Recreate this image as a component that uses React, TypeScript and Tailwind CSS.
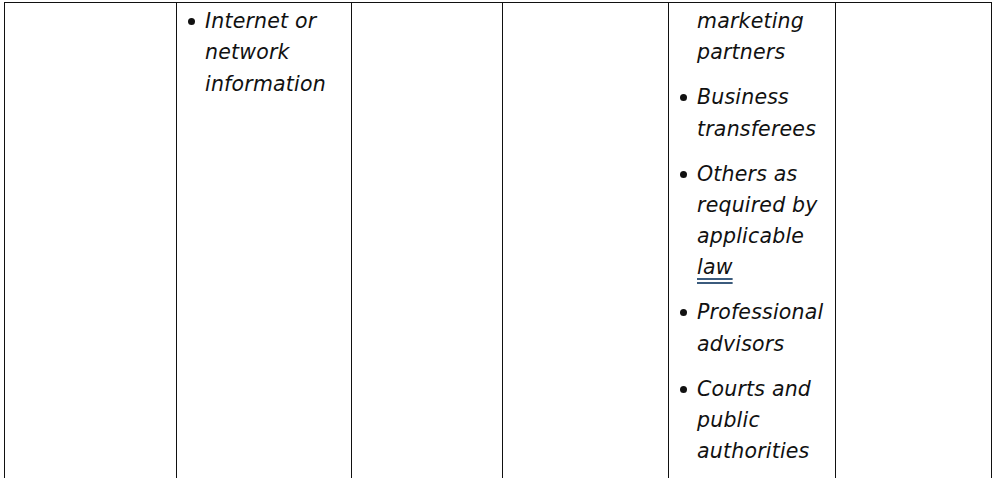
import React from 'react';

const font = { fontFamily: '"DejaVu Sans", "Noto Sans", sans-serif' };

type Item = { text: React.ReactNode; bullet?: boolean };

const BulletList: React.FC<{ items: Item[] }> = ({ items }) => (
  <ul className="flex flex-col gap-[13.7px]">
    {items.map((item, i) => (
      <li key={i} className="flex">
        <span className="w-[27px] shrink-0 flex justify-start pl-[10px] pt-[12px]">
          {item.bullet !== false && <span className="block w-[7px] h-[7px] rounded-full bg-[#111]" />}
        </span>
        <span className="italic text-[20.5px] tracking-[0.2px] leading-[31.3px] text-[#111]">{item.text}</span>
      </li>
    ))}
  </ul>
);

export default function App() {
  return (
    <div className="w-[993px] h-[478px] overflow-hidden bg-white pt-[2px] pl-[4px]" style={font}>
      <table className="table-fixed border-collapse w-[987px]">
        <colgroup>
          <col className="w-[172px]" />
          <col className="w-[175px]" />
          <col className="w-[151px]" />
          <col className="w-[166px]" />
          <col className="w-[167px]" />
          <col className="w-[156px]" />
        </colgroup>
        <tbody>
          <tr className="align-top">
            <td className="border border-[#111] h-[600px]" />
            <td className="border border-[#111] pl-[1px] pr-[4px] pt-[3px]">
              <BulletList items={[{ text: 'Internet or network information' }]} />
            </td>
            <td className="border border-[#111]" />
            <td className="border border-[#111]" />
            <td className="border border-[#111] pl-[1px] pr-[2px] pt-[3px]">
              <BulletList
                items={[
                  { text: 'marketing partners', bullet: false },
                  { text: 'Business transferees' },
                  {
                    text: (
                      <>
                        Others as required by applicable{' '}
                        <span className="underline decoration-double decoration-[#3b5b7d] underline-offset-[4px]">law</span>
                      </>
                    ),
                  },
                  { text: 'Professional advisors' },
                  { text: 'Courts and public authorities' },
                ]}
              />
            </td>
            <td className="border border-[#111]" />
          </tr>
        </tbody>
      </table>
    </div>
  );
}
